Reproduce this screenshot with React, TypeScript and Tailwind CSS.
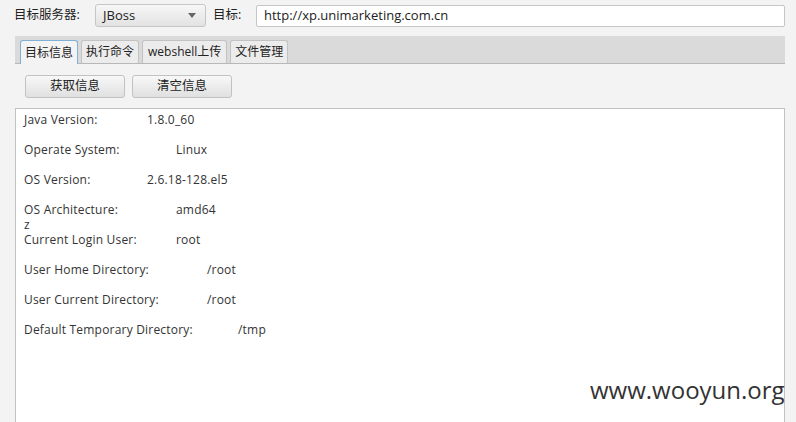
const tabs = ['目标信息', '执行命令', 'webshell上传', '文件管理']

const rows: { label: string; value: string; w: string }[] = [
  { label: 'Java Version:', value: '1.8.0_60', w: 'w-[123px]' },
  { label: 'Operate System:', value: 'Linux', w: 'w-[152px]' },
  { label: 'OS Version:', value: '2.6.18-128.el5', w: 'w-[123px]' },
  { label: 'OS Architecture:', value: 'amd64', w: 'w-[152px]' },
  { label: 'Current Login User:', value: 'root', w: 'w-[152px]' },
  { label: 'User Home Directory:', value: '/root', w: 'w-[183px]' },
  { label: 'User Current Directory:', value: '/root', w: 'w-[183px]' },
  { label: 'Default Temporary Directory:', value: '/tmp', w: 'w-[214px]' },
]

function Row({ label, value, w }: { label: string; value: string; w: string }) {
  return (
    <div className="flex h-[15px] leading-[15px] whitespace-nowrap">
      <span className={`${w} shrink-0`}>{label}</span>
      <span>{value}</span>
    </div>
  )
}

const Gap = () => <div className="h-[15px]" />

export default function App() {
  return (
    <div
      className="relative w-[796px] h-[422px] overflow-hidden bg-[#f3f3f3] text-[#222] text-[12px]"
      style={{ fontFamily: '"Open Sans", "Noto Sans CJK SC", sans-serif' }}
    >
      {/* top row */}
      <div className="flex items-center h-[30px] pt-[1px] pl-[14px] pr-[11px]">
        <span className="text-[12.5px] w-[81px]">目标服务器:</span>
        <div className="flex items-center justify-between w-[111px] h-[23px] pl-[7px] pr-[9px] border border-[#c6c6c6] rounded-[3px] bg-gradient-to-b from-[#f7f7f7] to-[#e2e2e2]">
          <span className="text-[13px]">JBoss</span>
          <svg width="8" height="5" viewBox="0 0 8 5">
            <path d="M0 0h8L4 5z" fill="#666" />
          </svg>
        </div>
        <span className="ml-[7px] w-[43px] text-[12.5px]">目标:</span>
        <div className="flex-1 h-[22px] px-[7px] flex items-center bg-white border border-[#c6c6c6] rounded-[2px] text-[13px]">
          http://xp.unimarketing.com.cn
        </div>
      </div>

      {/* tab bar */}
      <div className="mt-[6px] ml-[15px] mr-[11px] h-[28px] bg-[#dadada] border-b border-[#b8b8b8] flex items-end pl-[5px] gap-[3px]">
        {tabs.map((t, i) => (
          <div
            key={t}
            className={
              i === 0
                ? 'h-[24px] px-[4px] flex items-center text-[12px] bg-[#f3f3f3] border border-b-0 border-[#7fb0d8] rounded-t-[3px] -mb-[1px]'
                : i === 2
                  ? 'h-[23px] px-[5px] flex items-center text-[12px] bg-[#ececec] border border-b-0 border-[#c2c2c2] rounded-t-[3px]'
                  : 'h-[23px] px-[4px] flex items-center text-[12px] bg-[#ececec] border border-b-0 border-[#c2c2c2] rounded-t-[3px]'
            }
          >
            {t}
          </div>
        ))}
      </div>

      {/* buttons */}
      <div className="flex gap-[7px] ml-[25px] mt-[11px]">
        {['获取信息', '清空信息'].map((b) => (
          <div
            key={b}
            className="w-[100px] h-[23px] flex items-center justify-center text-[12.5px] border border-[#c2c2c2] rounded-[3px] bg-gradient-to-b from-[#f8f8f8] to-[#e0e0e0]"
          >
            {b}
          </div>
        ))}
      </div>

      {/* output area */}
      <div className="mt-[10px] ml-[15px] mr-[11px] h-[320px] bg-white border border-[#c2c2c2] pl-[8px] pt-[3px] text-[12px] tracking-[0.2px] text-[#333]">
        <Row {...rows[0]} />
        <Gap />
        <Row {...rows[1]} />
        <Gap />
        <Row {...rows[2]} />
        <Gap />
        <Row {...rows[3]} />
        <div className="h-[15px] leading-[15px]">z</div>
        <Row {...rows[4]} />
        <Gap />
        <Row {...rows[5]} />
        <Gap />
        <Row {...rows[6]} />
        <Gap />
        <Row {...rows[7]} />
      </div>

      {/* watermark */}
      <div
        className="absolute left-[590px] top-[378px] text-[24px] text-[#333] leading-none"
        style={{ fontFamily: '"Open Sans", sans-serif' }}
      >
        www.wooyun.org
      </div>
    </div>
  )
}
